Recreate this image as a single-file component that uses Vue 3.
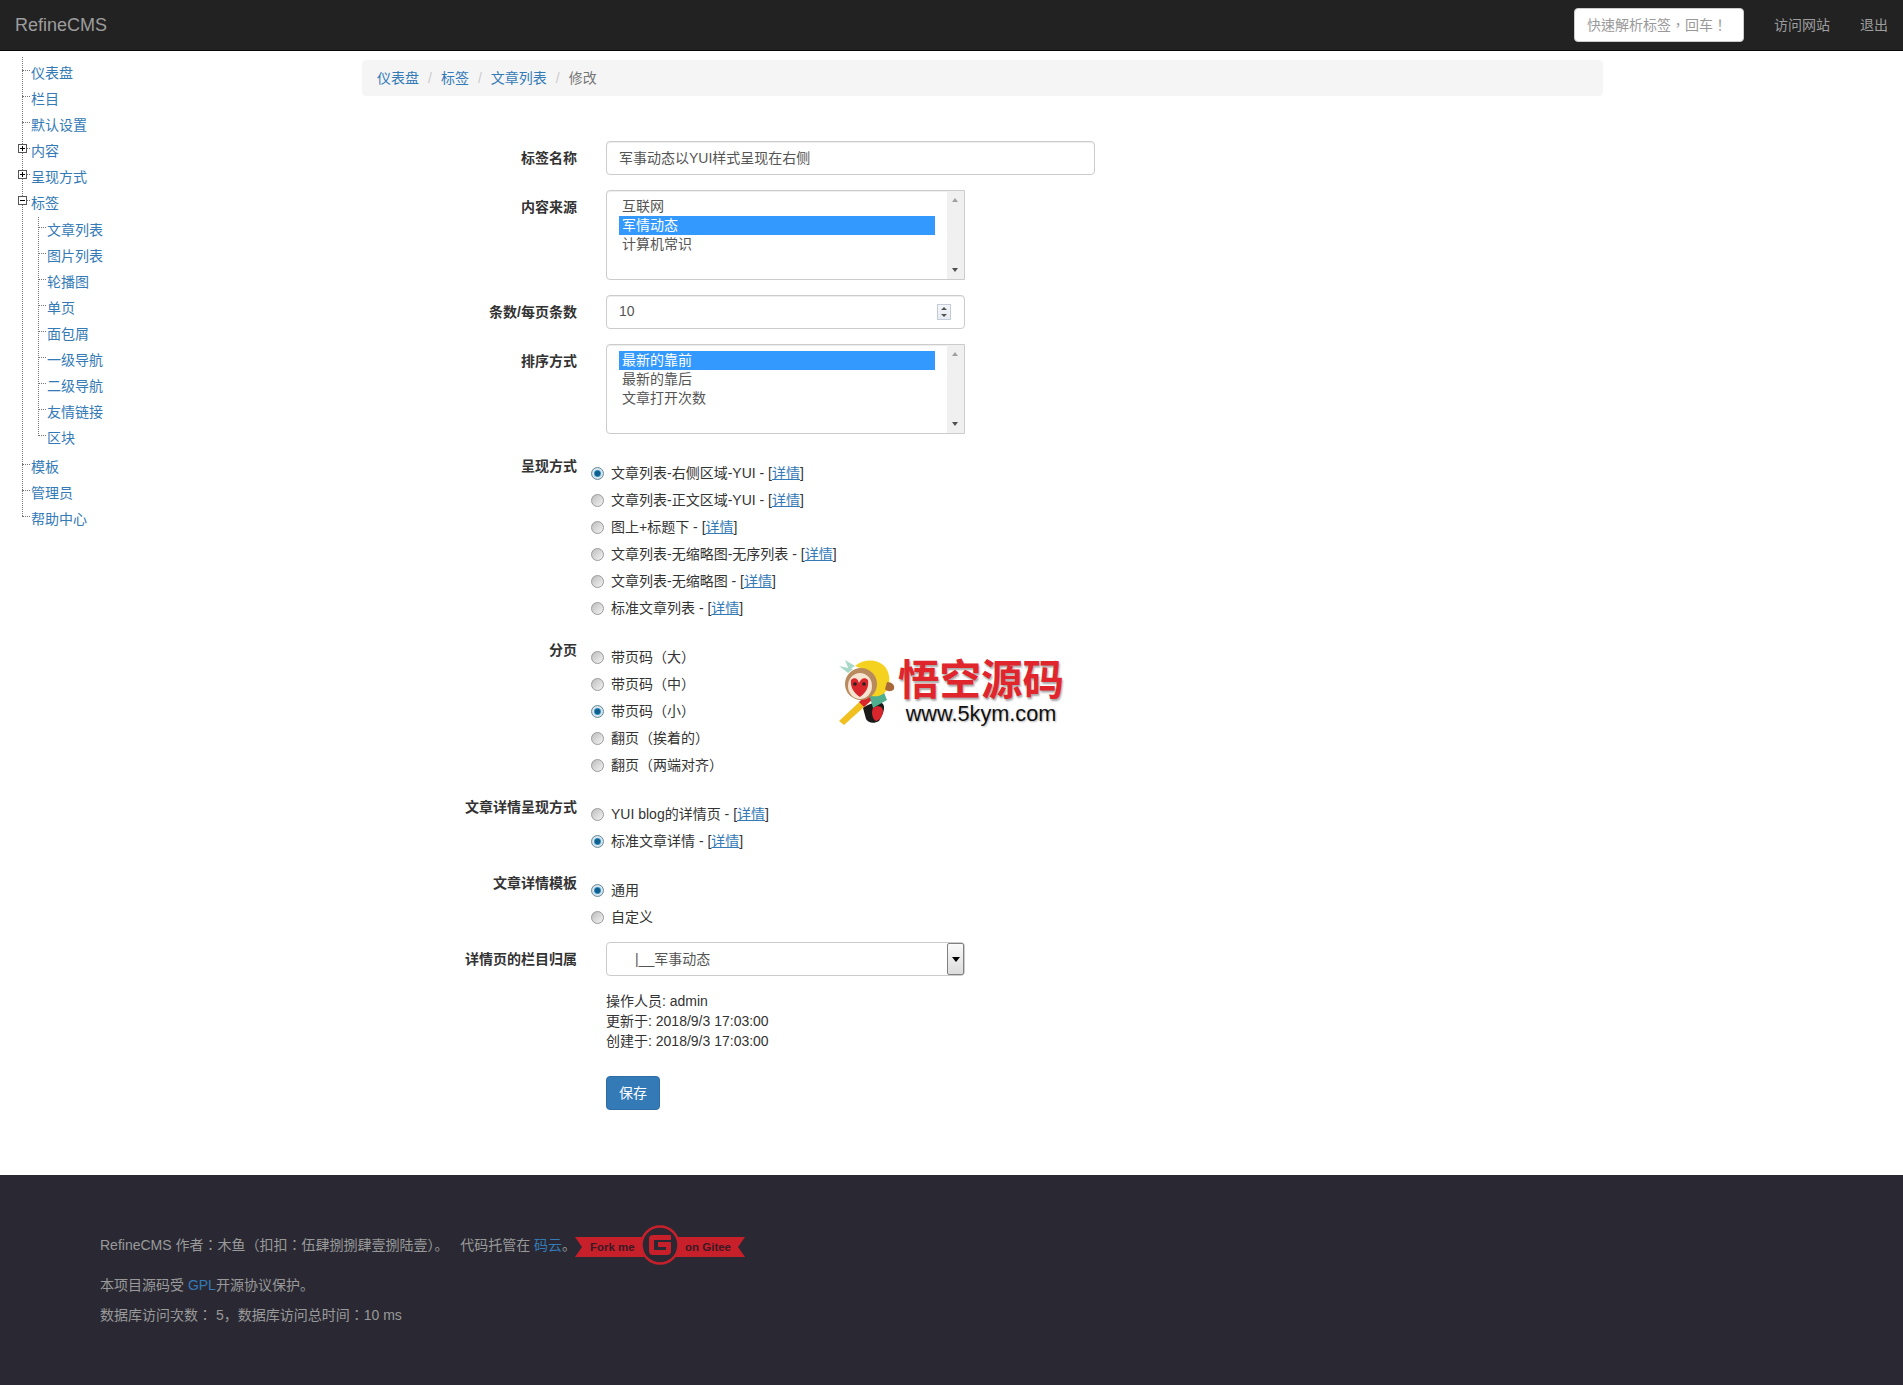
<script setup>
const tree = [
  { name: '仪表盘' },
  { name: '栏目' },
  { name: '默认设置' },
  { name: '内容', toggle: 'plus' },
  { name: '呈现方式', toggle: 'plus' },
  {
    name: '标签',
    toggle: 'minus',
    children: ['文章列表', '图片列表', '轮播图', '单页', '面包屑', '一级导航', '二级导航', '友情链接', '区块']
  },
  { name: '模板' },
  { name: '管理员' },
  { name: '帮助中心' }
]

const crumbs = ['仪表盘', '标签', '文章列表']

const sources = [
  { text: '互联网' },
  { text: '军情动态', selected: true },
  { text: '计算机常识' }
]

const orders = [
  { text: '最新的靠前', selected: true },
  { text: '最新的靠后' },
  { text: '文章打开次数' }
]

const radioGroups = [
  {
    label: '呈现方式',
    items: [
      { text: '文章列表-右侧区域-YUI - ', detail: true, checked: true },
      { text: '文章列表-正文区域-YUI - ', detail: true },
      { text: '图上+标题下 - ', detail: true },
      { text: '文章列表-无缩略图-无序列表 - ', detail: true },
      { text: '文章列表-无缩略图 - ', detail: true },
      { text: '标准文章列表 - ', detail: true }
    ]
  },
  {
    label: '分页',
    items: [
      { text: '带页码（大）' },
      { text: '带页码（中）' },
      { text: '带页码（小）', checked: true },
      { text: '翻页（挨着的）' },
      { text: '翻页（两端对齐）' }
    ]
  },
  {
    label: '文章详情呈现方式',
    items: [
      { text: 'YUI blog的详情页 - ', detail: true },
      { text: '标准文章详情 - ', detail: true, checked: true }
    ]
  },
  {
    label: '文章详情模板',
    items: [{ text: '通用', checked: true }, { text: '自定义' }]
  }
]
</script>

<template>
  <div class="page">
    <header class="navbar">
      <a class="brand">RefineCMS</a>
      <div class="nav-right">
        <input class="quick tc" type="text" placeholder="快速解析标签，回车！" />
        <a class="nav-link">访问网站</a>
        <a class="nav-link">退出</a>
      </div>
    </header>

    <div class="body">
      <aside class="sidebar">
        <ul class="tree">
          <li v-for="node in tree" :key="node.name" class="node">
            <svg v-if="node.toggle" class="toggle" width="9" height="9" viewBox="0 0 9 9">
              <rect x="0.5" y="0.5" width="8" height="8" fill="#fff" stroke="#555" />
              <path d="M2 4.5h5" stroke="#000" />
              <path v-if="node.toggle === 'plus'" d="M4.5 2v5" stroke="#000" />
            </svg>
            <a>{{ node.name }}</a>
            <ul v-if="node.children" class="tree-sub">
              <li v-for="child in node.children" :key="child" class="node"><a>{{ child }}</a></li>
            </ul>
          </li>
        </ul>
      </aside>

      <main class="main">
        <ol class="breadcrumb">
          <li v-for="c in crumbs" :key="c"><a>{{ c }}</a><span class="sep">/</span></li>
          <li class="active">修改</li>
        </ol>

        <form class="form">
          <div class="row">
            <label class="lbl">标签名称</label>
            <input class="control wide" type="text" value="军事动态以YUI样式呈现在右侧" />
          </div>

          <div class="row">
            <label class="lbl">内容来源</label>
            <div class="listbox">
              <div class="options">
                <div v-for="o in sources" :key="o.text" class="option" :class="{ selected: o.selected }">{{ o.text }}</div>
              </div>
              <div class="scrollbar"><i class="up"></i><i class="down"></i></div>
            </div>
          </div>

          <div class="row">
            <label class="lbl">条数/每页条数</label>
            <div class="number">
              <input class="control" type="text" value="10" />
              <div class="spinner"><i class="up"></i><i class="down"></i></div>
            </div>
          </div>

          <div class="row">
            <label class="lbl">排序方式</label>
            <div class="listbox">
              <div class="options">
                <div v-for="o in orders" :key="o.text" class="option" :class="{ selected: o.selected }">{{ o.text }}</div>
              </div>
              <div class="scrollbar"><i class="up"></i><i class="down"></i></div>
            </div>
          </div>

          <div v-for="g in radioGroups" :key="g.label" class="row">
            <label class="lbl">{{ g.label }}</label>
            <div class="radios">
              <label v-for="r in g.items" :key="r.text" class="radio">
                <input type="radio" :name="g.label" :checked="r.checked" />
                <span>{{ r.text }}<template v-if="r.detail">[<a>详情</a>]</template></span>
              </label>
            </div>
          </div>

          <div class="row">
            <label class="lbl">详情页的栏目归属</label>
            <div class="dropdown">
              <span class="dropdown-text">|__军事动态</span>
              <span class="dropdown-btn"><i></i></span>
            </div>
          </div>

          <div class="row info-row">
            <span></span>
            <div class="info">
              <div>操作人员: admin</div>
              <div>更新于: 2018/9/3 17:03:00</div>
              <div>创建于: 2018/9/3 17:03:00</div>
            </div>
          </div>

          <div class="row submit-row">
            <span></span>
            <button type="button" class="btn">保存</button>
          </div>

          <div class="watermark">
            <svg class="monkey" width="60" height="68" viewBox="0 0 60 68">
              <path d="M2 63L32 35l5 5L7 67z" fill="#f0c020" />
              <path d="M22 44l10-9 5 5-10 9z" fill="#d8262c" />
              <path d="M26 50c6-4 16-8 20-4 3 4-1 12-4 17-5 3-11 2-13-2z" fill="#1a1a1a" />
              <path d="M36 50c5-3 10-2 10 3 0 5-3 9-7 10-4-2-5-9-3-13z" fill="#d8262c" />
              <path d="M32 36l14-4 4 10-14 8z" fill="#4fae8e" />
              <path d="M18 8C30-2 50 2 52 18c2 14-6 22-18 20 8-8 6-22-16-30z" fill="#f5d21f" />
              <path d="M50 24c5 0 8 3 7 7-2 3-7 3-9 0z" fill="#a8683a" />
              <path d="M8 2l10 6-6 4zM2 8l14 3-5 4z" fill="#a9d8c8" />
              <circle cx="24" cy="26" r="16" fill="#b98a5e" />
              <ellipse cx="23" cy="28" rx="12" ry="13" fill="#f6e4d0" />
              <path d="M14 22c3-3 7-2 8 3 2-5 6-6 9-3 1 6-1 12-8 17-6-4-10-10-9-17z" fill="#d8262c" />
              <circle cx="18" cy="26" r="1.8" fill="#222" />
              <circle cx="27" cy="26" r="1.8" fill="#222" />
            </svg>
            <div class="wm-text">
              <div class="wm-title">悟空源码</div>
              <div class="wm-url">www.5kym.com</div>
            </div>
          </div>
        </form>
      </main>
    </div>

    <footer class="footer">
      <div class="foot-first">
        <span class="foot-copy"><span class="tc">RefineCMS 作者：木鱼（扣扣：伍肆捌捌肆壹捌陆壹）</span>。&nbsp;&nbsp; 代码托管在 <a>码云</a>。</span>
        <svg class="gitee" width="170" height="41" viewBox="0 0 170 41">
          <path d="M0 12H170L163 22L170 32H0L7 22z" fill="#c8202a" />
          <circle cx="85" cy="20" r="18.5" fill="#2a2933" stroke="#c8202a" stroke-width="2.5" />
          <path d="M74 14q0-4 4-4h18v5H79v10h12v-3h-8v-5h13v9q0 4-4 4H78q-4 0-4-4z" fill="#c8202a" />
          <text x="15" y="26" class="gitee-text">Fork me</text>
          <text x="110" y="26" class="gitee-text">on Gitee</text>
        </svg>
      </div>
      <p>本项目源码受 <a>GPL</a>开源协议保护。</p>
      <p><span class="tc">数据库访问次数： 5</span>，数据库访问总时间<span class="tc">：</span>10 ms</p>
    </footer>
  </div>
</template>

<style scoped>
.page {
  font-family: "Liberation Sans", "Noto Sans CJK SC", sans-serif;
  font-size: 14px;
  line-height: 20px;
  color: #333;
}

/* 全角冒号、叹号居中，TC 字形更接近 */
.tc {
  font-family: "Liberation Sans", "Noto Sans CJK TC", sans-serif;
}

a {
  color: #337ab7;
}

.navbar {
  display: flex;
  align-items: center;
  justify-content: space-between;
  height: 50px;
  background: #222;
  border-bottom: 1px solid #080808;
}

.brand {
  margin-left: 15px;
  font-size: 18px;
  color: #9d9d9d;
}

.nav-right {
  display: flex;
  align-items: center;
}

.quick {
  box-sizing: border-box;
  width: 170px;
  height: 34px;
  margin-right: 15px;
  padding: 6px 12px;
  border: 1px solid #ccc;
  border-radius: 4px;
  font-size: 14px;
  background: #fff;
}

.quick::placeholder {
  color: #999;
}

.nav-link {
  padding: 15px;
  color: #9d9d9d;
}

.body {
  display: grid;
  grid-template-columns: 362px 1241px;
  height: 1124px;
}

.sidebar {
  padding: 9px 0 0 22px;
}

.tree {
  position: relative;
  list-style: none;
  margin: 0;
  padding: 0;
}

.tree::before,
.tree-sub::before {
  content: '';
  position: absolute;
  left: 0;
  border-left: 1px dotted #777;
}

.tree::before {
  top: -3px;
  bottom: 16px;
}

.tree-sub {
  position: relative;
  list-style: none;
  margin: 1px 0 3px 7px;
  padding: 0;
}

.tree-sub::before {
  top: 0;
  bottom: 17px;
}

.node {
  position: relative;
  padding-left: 9px;
}

.node > a {
  display: block;
  height: 26px;
  line-height: 26px;
}

.node::before {
  content: '';
  position: absolute;
  left: 0;
  top: 10px;
  width: 8px;
  border-top: 1px dotted #777;
}

.toggle {
  position: absolute;
  z-index: 1;
  left: -4px;
  top: 6px;
}

.main {
  padding-top: 9px;
}

.breadcrumb {
  display: flex;
  list-style: none;
  margin: 0 0 45px;
  padding: 8px 15px;
  background: #f5f5f5;
  border-radius: 4px;
}

.sep {
  padding: 0 9px;
  color: #ccc;
}

.active {
  color: #777;
}

.form {
  position: relative;
}

.row {
  display: grid;
  grid-template-columns: 215px 1fr;
  column-gap: 29px;
  align-items: start;
  margin-bottom: 15px;
}

.lbl {
  padding-top: 7px;
  text-align: right;
  font-weight: 700;
}

.control {
  box-sizing: border-box;
  display: block;
  width: 359px;
  height: 34px;
  padding: 5px 12px 7px;
  border: 1px solid #ccc;
  border-radius: 4px;
  font: inherit;
  color: #555;
  box-shadow: inset 0 1px 1px rgba(0, 0, 0, 0.075);
}

.control.wide {
  width: 489px;
}

.listbox {
  box-sizing: border-box;
  display: flex;
  width: 359px;
  height: 90px;
  border: 1px solid #ccc;
  border-radius: 4px 0 0 4px;
  color: #555;
  box-shadow: inset 0 1px 1px rgba(0, 0, 0, 0.075);
}

.options {
  flex: 1;
  padding: 6px 12px;
}

.option {
  height: 19px;
  padding: 0 3px 1px;
  box-sizing: border-box;
  line-height: 18px;
}

.option.selected {
  background: #3399ff;
  color: #fff;
}

.scrollbar {
  position: relative;
  width: 17px;
  background: #f0f0f0;
}

.scrollbar i {
  position: absolute;
  left: 5px;
  border-left: 3.5px solid transparent;
  border-right: 3.5px solid transparent;
}

.scrollbar .up {
  top: 7px;
  border-bottom: 4px solid #a0a0a0;
}

.scrollbar .down {
  bottom: 7px;
  border-top: 4px solid #505050;
}

.number {
  position: relative;
  width: 359px;
}

.spinner {
  position: absolute;
  top: 9px;
  right: 14px;
  box-sizing: border-box;
  width: 14px;
  height: 16px;
  border: 1px solid #c4ccd8;
  background: linear-gradient(#f4f6fa, #e6eaf2);
}

.spinner i {
  position: absolute;
  left: 3px;
  border-left: 3px solid transparent;
  border-right: 3px solid transparent;
}

.spinner .up {
  top: 2px;
  border-bottom: 3px solid #555;
}

.spinner .down {
  bottom: 2px;
  border-top: 3px solid #555;
}

.radios {
  margin-left: -15px;
  padding-top: 14px;
}

.radio {
  display: flex;
  align-items: center;
  height: 20px;
  margin-bottom: 7px;
}

.radio:last-child {
  margin-bottom: 0;
}

.radio input {
  appearance: none;
  flex: none;
  box-sizing: border-box;
  width: 13px;
  height: 13px;
  margin: 0 7px 0 0;
  border: 1px solid #9a9a9a;
  border-radius: 50%;
  background: linear-gradient(135deg, #bdbdbd, #f4f4f4);
}

.radio input:checked {
  background: radial-gradient(circle, #0f5f8f 0 2.5px, #4aa0d0 3.2px, #d8e6ee 4px, #c8d4dc);
  border-color: #6a8a9a;
}

.radio a {
  text-decoration: underline;
}

.dropdown {
  box-sizing: border-box;
  position: relative;
  display: flex;
  align-items: center;
  width: 359px;
  height: 34px;
  padding: 0 12px;
  border: 1px solid #ccc;
  border-radius: 4px;
  color: #555;
}

.dropdown-text {
  padding-left: 16px;
}

.dropdown-btn {
  position: absolute;
  top: 0;
  right: 0;
  bottom: 0;
  box-sizing: border-box;
  width: 17px;
  display: flex;
  align-items: center;
  justify-content: center;
  border: 1px solid #808080;
  border-radius: 2px;
  background: linear-gradient(#fafafa, #dcdcdc);
}

.dropdown-btn i {
  border-left: 4px solid transparent;
  border-right: 4px solid transparent;
  border-top: 5px solid #000;
}

.info-row {
  margin-bottom: 25px;
}

.submit-row {
  margin-bottom: 0;
}

.btn {
  width: 54px;
  height: 34px;
  padding: 0;
  border: 1px solid #2e6da4;
  border-radius: 4px;
  background: #337ab7;
  color: #fff;
  font: inherit;
}

.watermark {
  position: absolute;
  left: 475px;
  top: 517px;
  display: flex;
  align-items: flex-start;
}

.monkey {
  flex: none;
}

.wm-text {
  margin-left: 1px;
  text-align: center;
}

.wm-title {
  margin-top: 1px;
  font-size: 41.5px;
  line-height: 43px;
  font-weight: 700;
  color: #e0262c;
  text-shadow: 1px 2px 2px rgba(0, 0, 0, 0.35);
  white-space: nowrap;
}

.wm-url {
  font-size: 21.7px;
  line-height: 24px;
  color: #111;
  text-shadow: 1px 1px 2px rgba(0, 0, 0, 0.3);
}

.footer {
  box-sizing: border-box;
  height: 210px;
  padding: 49px 100px 0;
  background: #2a2933;
  color: #999;
}

.foot-first {
  display: flex;
  align-items: center;
  height: 41px;
  margin-bottom: 10px;
}

.foot-copy {
  flex: none;
  width: 475px;
  white-space: nowrap;
}

.gitee {
  flex: none;
  margin-top: 2px;
}

.gitee-text {
  font-family: "Liberation Sans", sans-serif;
  font-size: 11.5px;
  font-weight: 700;
  fill: #3a1a24;
}

.footer p {
  margin: 0 0 10px;
}
</style>

<style>
body {
  background: #fff;
}
</style>
